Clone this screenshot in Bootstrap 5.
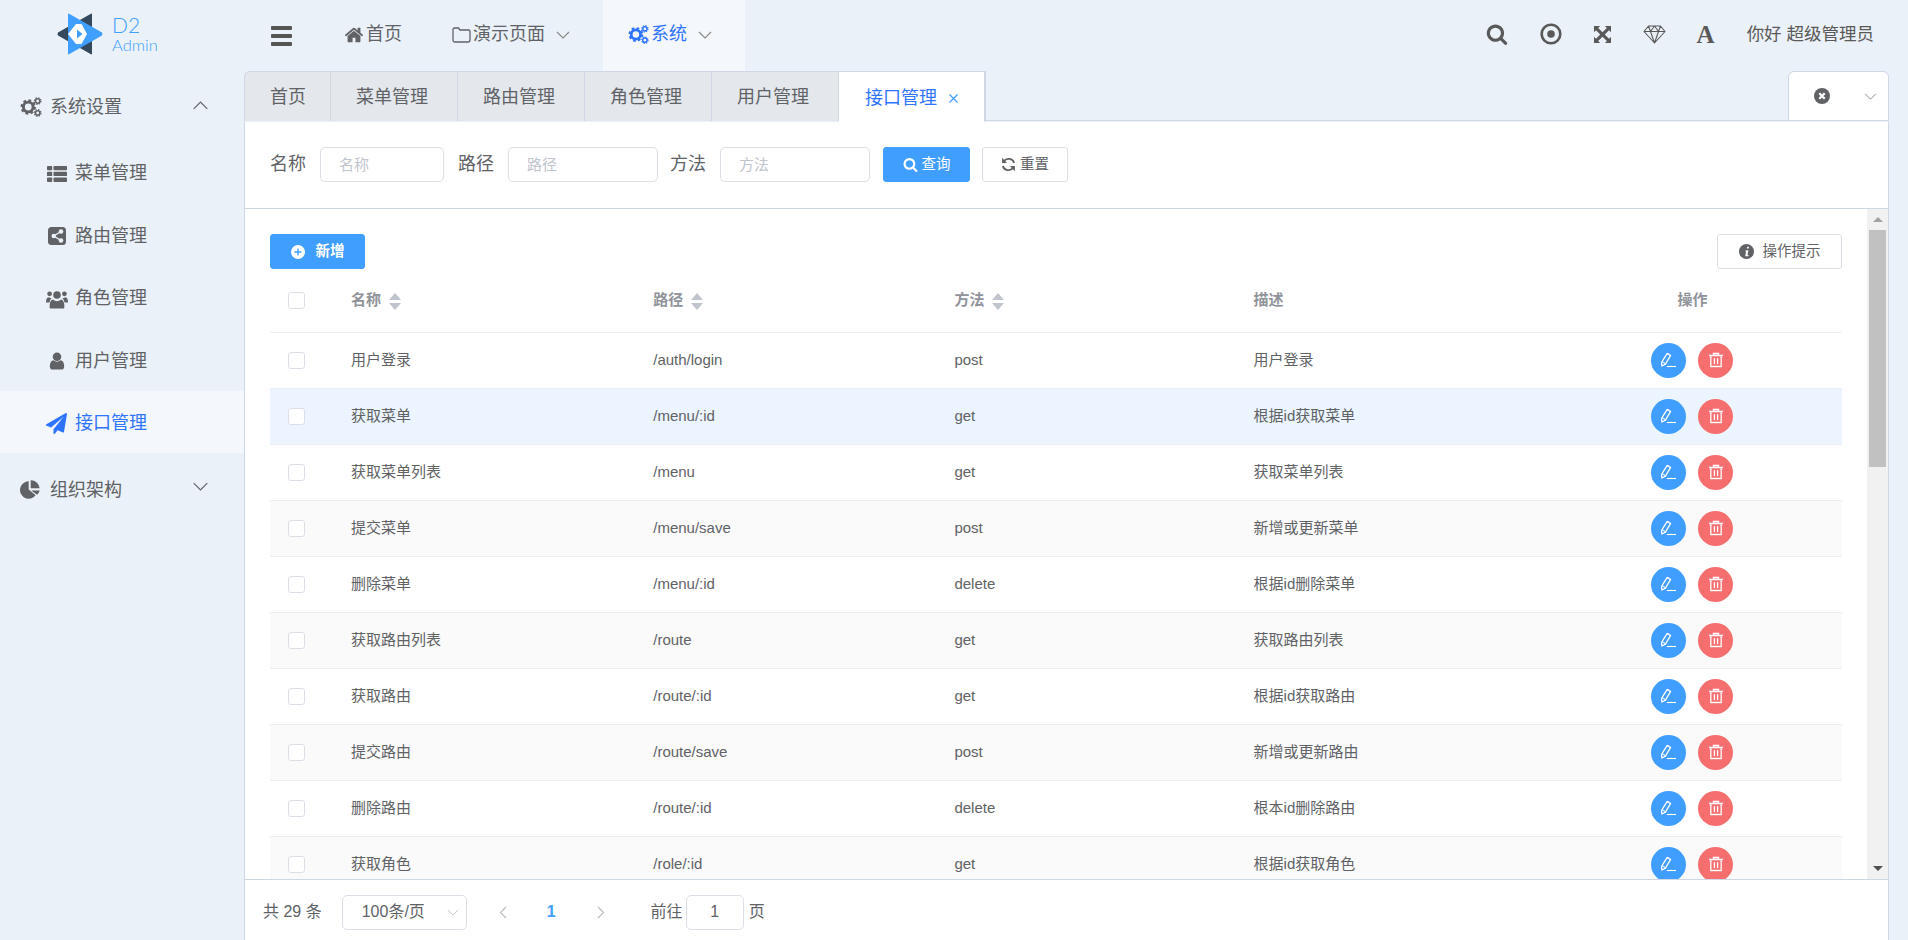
<!DOCTYPE html>
<html lang="zh-CN">
<head>
<meta charset="utf-8">
<title>接口管理</title>
<link rel="stylesheet" href="https://cdn.jsdelivr.net/npm/bootstrap@5.3.0/dist/css/bootstrap.min.css">
<style>
:root{--pg:#ebf1f8;--ink:#606266;--line:#cfd7e5;--blue:#409eff;--act:#2f74ff;--cell:#ebeef5}
html,body{height:100%}
body{background:var(--pg);color:var(--ink);font-family:"Liberation Sans","Noto Sans CJK SC",sans-serif;font-size:18px;overflow:hidden}
svg{display:block;flex:none;fill:currentColor}
.chev{fill:none;stroke:currentColor;stroke-width:1.1}
.shell{height:940px}
.topbar{height:71px;flex:none}
.logo-box{width:245px;padding:0 0 3px 57px;gap:9px;flex:none;height:71px}
.logo-d2{font-family:Lato,sans-serif;color:var(--blue);line-height:1}
.logo-d2 b{display:block;font-weight:300;font-size:21px;line-height:21px}
.logo-d2 i{display:block;font-style:normal;font-size:16.5px;line-height:17px;margin-top:2px;font-weight:300}
.burger{width:21px;margin:0 27px 0 26px;gap:4px}
.burger span{display:block;height:4px;background:#555;border-radius:1px}
.hnav{height:71px;padding:0 25px 2px;gap:2px}
.hnav .chev{margin-left:9px;color:#888}
.hnav.sub{padding-right:33px}
.hnav.now{background:#f4f7fb;color:var(--act)}
.tool-btn{color:#595959}
.tools{gap:0;padding:0 34px 3px 0}
.hello{font-size:17.5px;margin-left:32px}
.ico-a{font-family:"Liberation Serif",serif;font-weight:700;font-size:25px;line-height:1}
.side{width:244px;flex:none;padding-top:7px}
.s-row{height:62.5px;padding-left:20px;padding-bottom:4px}
.s-row .lbl{margin-left:8px}
.s-row .chev{margin-left:auto;margin-right:35px;color:#666;margin-top:-4px}
.s-sub{padding-left:46px;padding-top:4px;padding-bottom:0}
.s-sub .ic{width:21px;display:flex;justify-content:center}
.s-sub .lbl{margin-left:8px}
.s-sub.now{background:#f4f7fb;color:var(--act)}
.s-row.s-last{padding-top:8px;padding-bottom:0;height:66px}
.s-row.s-last .chev{margin-top:-8px}
.workarea{margin-right:19px;min-width:0}
.tabbar{height:51px;flex:none}
.tabs-wrap{border-bottom:1px solid var(--line);height:50px}
.tabstrip{background:#e4e8ec;border:1px solid var(--line);border-bottom:0;border-top-left-radius:6px;height:50px;box-sizing:border-box}
.tabitem{height:49px;padding:2px 29px 0 25px;border-right:1px solid var(--line)}
.tabitem.first{padding-right:24px}
.tabitem.now{background:#fff;color:var(--act);height:50px;padding:2px 25px 0 26px;gap:11px}
.tabitem.now svg{color:var(--blue)}
.closer{width:101px;height:50px;background:#fff;border:1px solid var(--line);border-top-left-radius:6px;border-top-right-radius:6px;padding:0 11px 0 25px;flex:none;margin-left:auto}
.pane{background:#fff;border:solid var(--line);border-width:0 1px;min-height:0}
.qform{height:87px;padding:25px 0 0 25px;border-bottom:1px solid var(--line);flex:none}
.qform label{margin-right:14px;width:36px;white-space:nowrap;height:35px}
.qinput{height:35px;padding:0 18px;font-size:15px;border-color:#dcdfe6;border-radius:5px;margin-right:14px;color:var(--ink)}
.qinput.w1{width:124px}
.qinput.w2{width:150px;margin-right:12px}
.qinput.w3{width:150px;margin-right:13px}
.qinput::placeholder{color:#c0c4cc}
.qbtn{height:35px;font-size:14.5px;border-radius:3px;padding:0;gap:4px;line-height:1}
.qbtn.b1{width:87px;background:var(--blue);border-color:var(--blue);color:#fff}
.qbtn.b2{width:86px;margin-left:12px;background:#fff;border-color:#dcdfe6;color:var(--ink)}
.tablezone{flex:1 1 0;min-height:0}
.scroller{overflow:hidden;padding:25px 25px 0 25px;flex:1 1 0;min-width:0}
.rail{width:21px;flex:none;background:#f1f1f1;height:100%}
.rail-btn{height:21px;flex:none}
.rail-thumb{height:237px;margin:0 2px;background:#c1c1c1;flex:none}
.actbar{height:35px}
.add-btn{width:95px;height:35px;background:var(--blue);border-color:var(--blue);color:#fff;font-size:14.5px;font-weight:700;padding:0;gap:11px;border-radius:3px}
.tip-btn{width:125px;height:35px;background:#fff;border-color:#dcdfe6;color:var(--ink);font-size:14.5px;padding:0;gap:9px;border-radius:3px}
.api-table{table-layout:fixed;width:1572px;margin:0;font-size:15px;--bs-table-color:var(--ink);--bs-table-bg:transparent;border-color:var(--cell)}
.api-table th{height:63px;color:#909399;font-weight:700;padding:0 10px;vertical-align:middle;border-bottom:1px solid var(--cell)}
.api-table td{height:56px;padding:0 10px;vertical-align:middle;border-bottom:1px solid var(--cell);background:#fff}
.api-table tbody tr:nth-of-type(even) td{background:#fafafa}
.api-table tbody tr.hot td{background:#ecf5ff}
.api-table .c-sel{padding-left:18px}
.api-table .c-op{text-align:center}
.tick{width:17px;height:17px;border:1px solid #dcdfe6;border-radius:3px;background:#fff;display:block}
.sorter{display:inline-flex;flex-direction:column;gap:3px;margin-left:8px;vertical-align:middle}
.sorter i{display:block;width:0;height:0;border:solid transparent;border-width:0 6px}
.sorter i.up{border-bottom:7px solid #c0c4cc}
.sorter i.dn{border-top:7px solid #c0c4cc}
.round{width:35px;height:35px;border-radius:50%;border:0;padding:0;color:#fff;display:inline-flex;align-items:center;justify-content:center;vertical-align:middle}
.round.e{background:var(--blue)}
.round.d{background:#f76e6e;margin-left:12px}
.pager{height:61px;flex:none;border-top:1px solid var(--line);padding:4px 0 0 18px;font-size:16px}
.sizebox{width:125px;height:35px;border:1px solid #dcdfe6;border-radius:5px;margin-left:20px;padding:0 7px 0 19px;white-space:nowrap}
.sizebox svg{margin-left:auto;color:#c0c4cc}
.pg-prev{margin-left:32px;color:#b5b9c2}
.pg-cur{margin-left:40px;margin-right:41px;color:var(--blue);font-weight:700;font-size:16px}
.pg-next{color:#b5b9c2}
.goto{margin-left:46px}
.goinput{width:58px;height:35px;padding:0;text-align:center;margin:0 5px 0 3px;border-color:#dcdfe6;border-radius:5px;color:var(--ink);font-size:16px}
</style>
</head>
<body>
<svg width="0" height="0" class="position-absolute">
<defs>
<symbol id="i-home" viewBox="0 0 1792 1792"><path d="M1472 992v480q0 26-19 45t-45 19h-384v-384h-256v384h-384q-26 0-45-19t-19-45v-480q0-1 .5-3t.5-3l575-474 575 474q1 2 1 6zm223-69l-62 74q-8 9-21 11h-3q-13 0-21-7l-692-577-692 577q-12 8-24 7-13-2-21-11l-62-74q-8-10-7-23.500t11-21.500l719-599q32-26 76-26t76 26l244 204v-195q0-14 9-23t23-9h192q14 0 23 9t9 23v408l219 182q10 8 11 21.500t-7 23.500z"/></symbol>
<symbol id="i-search" viewBox="0 0 1792 1792"><path d="M1216 832q0-185-131.500-316.500t-316.500-131.500-316.500 131.500-131.500 316.500 131.500 316.500 316.500 131.500 316.500-131.500 131.500-316.500zm512 832q0 52-38 90t-90 38q-54 0-90-38l-343-342q-179 124-399 124-143 0-273.500-55.500t-225-150-150-225-55.500-273.500 55.500-273.500 150-225 225-150 273.500-55.500 273.500 55.500 225 150 150 225 55.500 273.500q0 220-124 399l343 343q37 37 37 90z"/></symbol>
<symbol id="i-user" viewBox="0 0 1792 1792"><path d="M1536 1399q0 109-62.500 187t-150.500 78h-854q-88 0-150.500-78t-62.500-187q0-85 8.500-160.500t31.500-152 58.500-131 94-89 134.500-34.500q131 128 313 128t313-128q76 0 134.500 34.500t94 89 58.500 131 31.500 152 8.500 160.500zm-256-887q0 159-112.500 271.500t-271.500 112.500-271.500-112.500-112.500-271.500 112.500-271.500 271.500-112.500 271.500 112.500 112.500 271.500z"/></symbol>
<symbol id="i-plane" viewBox="0 0 1792 1792"><path d="M1764 11q33 24 27 64l-256 1536q-5 29-32 45-14 8-31 8-11 0-24-5l-453-185-242 295q-18 23-49 23-13 0-22-4-19-7-30.500-23.500t-11.500-36.500v-349l864-1059-1069 925-395-162q-37-14-40-55-2-40 32-59l1664-960q15-9 32-9 20 0 36 11z"/></symbol>
<symbol id="i-pie" viewBox="0 0 20 20"><path d="M8.700 1.300A8.700 8.700 0 1 0 15.600 15.300L8.700 9.600z"/><path d="M10.700 0.300A8.700 8.700 0 0 1 19.600 8.300H10.700z"/><path d="M11.200 10.400h8.500A8.700 8.700 0 0 1 17 14.700z"/></symbol>
<symbol id="i-cogs" viewBox="0 0 24 24"><circle cx="9" cy="12" r="5.300" fill="none" stroke="currentColor" stroke-width="3.200"/><circle cx="9" cy="12" r="7.300" fill="none" stroke="currentColor" stroke-width="2.300" stroke-dasharray="3 2.730"/><circle cx="19.300" cy="5.500" r="2.400" fill="none" stroke="currentColor" stroke-width="1.700"/><circle cx="19.300" cy="5.500" r="3.600" fill="none" stroke="currentColor" stroke-width="1.300" stroke-dasharray="1.500 1.330"/><circle cx="19.300" cy="18.500" r="2.400" fill="none" stroke="currentColor" stroke-width="1.700"/><circle cx="19.300" cy="18.500" r="3.600" fill="none" stroke="currentColor" stroke-width="1.300" stroke-dasharray="1.500 1.330"/></symbol>
<symbol id="i-list" viewBox="0 0 20 16"><rect y="0" width="5.200" height="4.300" rx=".7"/><rect x="6.500" y="0" width="13.500" height="4.300" rx=".7"/><rect y="5.800" width="5.200" height="4.300" rx=".7"/><rect x="6.500" y="5.800" width="13.500" height="4.300" rx=".7"/><rect y="11.600" width="5.200" height="4.300" rx=".7"/><rect x="6.500" y="11.600" width="13.500" height="4.300" rx=".7"/></symbol>
<symbol id="i-share" viewBox="0 0 18 18"><rect width="18" height="18" rx="3.500"/><g fill="#ebf1f8"><circle cx="13" cy="4.500" r="2.300"/><circle cx="13" cy="13.500" r="2.300"/><circle cx="5.800" cy="9" r="2.300"/></g><path d="M13 4.500L5.800 9l7.200 4.500" fill="none" stroke="#ebf1f8" stroke-width="1.400"/></symbol>
<symbol id="i-users" viewBox="0 0 22 20"><circle cx="11" cy="6" r="3.800"/><circle cx="3.600" cy="4.800" r="2.400"/><circle cx="18.400" cy="4.800" r="2.400"/><path d="M4.800 19.500q-1.200 0-1.200-1.500 0-7 3.200-7.500 2 1.700 4.200 1.700t4.200-1.700q3.200.5 3.200 7.500 0 1.500-1.200 1.500z"/><path d="M0 13.500q0-5 2.500-5.300 1.200 1 3 .8-1.500 1.500-2 4.500z"/><path d="M22 13.500q0-5-2.500-5.300-1.200 1-3 .8 1.500 1.500 2 4.500z"/></symbol>
<symbol id="i-edit" viewBox="0 0 16 16"><path d="M6.800 1.300l3.200 1.900-4.900 8.200-3.400 1.800-.1-3.700z" fill="none" stroke="currentColor" stroke-width="1.200" stroke-linejoin="round"/><path d="M2.300 9.300l3.200 1.900" fill="none" stroke="currentColor" stroke-width="1"/><rect x="6.500" y="13.100" width="8.500" height="1.100"/></symbol>
<symbol id="i-trash" viewBox="0 0 16 16"><path d="M1 3.500h14M5.500 3.300V1.500h5v1.800M2.800 3.500v11h10.400v-11M6.400 6v6M9.600 6v6" fill="none" stroke="currentColor" stroke-width="1.300"/></symbol>
<symbol id="i-down" viewBox="0 0 14 8"><path class="chev" d="M1 1l6 6 6-6"/></symbol>
<symbol id="i-up" viewBox="0 0 14 8"><path class="chev" d="M1 7l6-6 6 6"/></symbol>
</defs>
</svg>

<div class="shell d-flex flex-column">
  <header class="topbar d-flex align-items-center">
    <div class="logo-box d-flex align-items-center">
      <svg width="46" height="42" viewBox="0 0 46 42" aria-hidden="true">
        <path d="M35 1.500Q35 0 33.500 .9L1 19.600q-1 1.400 0 2.800L33.500 41.100Q35 42 35 40.500z" fill="#34495e"/>
        <path d="M11 1.500Q11 0 12.500 .9L45 19.600q1 1.400 0 2.800L12.500 41.100Q11 42 11 40.500z" fill="#409eff"/>
        <path d="M11 21l8-10 5.500 0L30 21l-5.500 10H19z" fill="#fff"/>
        <path d="M20 16.500l5.500 4.500-5.500 4.500z" fill="#409eff"/>
      </svg>
      <div class="logo-d2"><b>D2</b><i>Admin</i></div>
    </div>
    <div class="burger d-flex flex-column"><span></span><span></span><span></span></div>
    <div class="hnav d-flex align-items-center"><svg width="20" height="20"><use href="#i-home"/></svg><span>首页</span></div>
    <div class="hnav sub d-flex align-items-center">
      <svg width="19" height="18" viewBox="0 0 19 18"><path d="M1 14V3.500Q1 2 2.500 2h4L8 4h8.500Q18 4 18 5.500V14q0 2-2 2H3q-2 0-2-2z" fill="none" stroke="currentColor" stroke-width="1.300"/></svg>
      <span>演示页面</span><svg class="chev" width="14" height="8"><use href="#i-down"/></svg>
    </div>
    <div class="hnav sub now d-flex align-items-center"><svg width="21" height="21"><use href="#i-cogs"/></svg><span>系统</span><svg class="chev" width="14" height="8"><use href="#i-down"/></svg></div>
    <div class="tools ms-auto d-flex align-items-center tool-btn">
      <svg width="22" height="22" class="me-4"><use href="#i-search"/></svg>
      <svg width="22" height="22" viewBox="0 0 22 22" style="margin-left:8px"><circle cx="11" cy="11" r="9.300" fill="none" stroke="currentColor" stroke-width="2.600"/><circle cx="11" cy="11" r="3.800"/></svg>
      <svg width="17" height="17" viewBox="0 0 18 18" style="margin-left:32px"><path d="M0 0h6.500L4.400 2.100 9 6.600 13.600 2.100 11.500 0H18v6.500L15.900 4.400 11.400 9l4.500 4.600 2.100-2.100V18h-6.500l2.100-2.100L9 11.400l-4.600 4.500L6.500 18H0v-6.500l2.100 2.100L6.600 9 2.100 4.400 0 6.500z"/></svg>
      <svg width="23" height="19" viewBox="0 0 23 19" style="margin-left:32px"><path d="M5.500 1h12L22 6.500 11.500 18 1 6.500zM1 6.500h21M7.500 6.500l4 11.500 4-11.500M5.500 1l2 5.500L11.500 1l4 5.500 2-5.500" fill="none" stroke="currentColor" stroke-width="1.100" stroke-linejoin="round"/></svg>
      <span class="ico-a" style="margin-left:31px">A</span>
      <span class="hello">你好 超级管理员</span>
    </div>
  </header>

  <div class="d-flex flex-grow-1" style="min-height:0">
    <aside class="side">
      <div class="s-row d-flex align-items-center"><svg width="22" height="22"><use href="#i-cogs"/></svg><span class="lbl">系统设置</span><svg class="chev" width="17" height="9"><use href="#i-up"/></svg></div>
      <div class="s-row s-sub d-flex align-items-center"><span class="ic"><svg width="20" height="16"><use href="#i-list"/></svg></span><span class="lbl">菜单管理</span></div>
      <div class="s-row s-sub d-flex align-items-center"><span class="ic"><svg width="18" height="18"><use href="#i-share"/></svg></span><span class="lbl">路由管理</span></div>
      <div class="s-row s-sub d-flex align-items-center"><span class="ic"><svg width="22" height="20"><use href="#i-users"/></svg></span><span class="lbl">角色管理</span></div>
      <div class="s-row s-sub d-flex align-items-center"><span class="ic"><svg width="20" height="20"><use href="#i-user"/></svg></span><span class="lbl">用户管理</span></div>
      <div class="s-row s-sub now d-flex align-items-center"><span class="ic"><svg width="21" height="21"><use href="#i-plane"/></svg></span><span class="lbl">接口管理</span></div>
      <div class="s-row s-last d-flex align-items-center"><svg width="20" height="20"><use href="#i-pie"/></svg><span class="lbl" style="margin-left:10px">组织架构</span><svg class="chev" width="17" height="9"><use href="#i-down"/></svg></div>
    </aside>

    <main class="workarea flex-grow-1 d-flex flex-column">
      <div class="tabbar d-flex">
        <div class="tabs-wrap flex-grow-1 d-flex">
          <div class="tabstrip d-flex">
            <div class="tabitem first d-flex align-items-center">首页</div>
            <div class="tabitem d-flex align-items-center">菜单管理</div>
            <div class="tabitem d-flex align-items-center">路由管理</div>
            <div class="tabitem d-flex align-items-center">角色管理</div>
            <div class="tabitem d-flex align-items-center">用户管理</div>
            <div class="tabitem now d-flex align-items-center"><span>接口管理</span><svg width="11" height="11" viewBox="0 0 11 11"><path d="M1.500 1.500l8 8M9.500 1.500l-8 8" stroke="currentColor" stroke-width="1.200"/></svg></div>
          </div>
          <div class="closer d-flex align-items-center justify-content-between">
            <svg width="16" height="16" viewBox="0 0 16 16"><circle cx="8" cy="8" r="8" fill="#606266"/><path d="M5.300 5.300l5.400 5.400M10.700 5.300l-5.400 5.400" stroke="#fff" stroke-width="2.300"/></svg>
            <svg class="chev" width="13" height="7" style="color:#888"><use href="#i-down"/></svg>
          </div>
        </div>
      </div>

      <div class="pane flex-grow-1 d-flex flex-column">
        <form class="qform d-flex align-items-start" onsubmit="return false">
          <label class="d-flex align-items-center">名称</label>
          <input class="form-control qinput w1" placeholder="名称">
          <label class="d-flex align-items-center">路径</label>
          <input class="form-control qinput w2" placeholder="路径">
          <label class="d-flex align-items-center">方法</label>
          <input class="form-control qinput w3" placeholder="方法">
          <button class="btn qbtn b1 d-inline-flex align-items-center justify-content-center"><svg width="15" height="15"><use href="#i-search"/></svg>查询</button>
          <button class="btn qbtn b2 d-inline-flex align-items-center justify-content-center"><svg width="15" height="15" viewBox="0 0 14 14"><path d="M12.300 5.500A5.500 5.500 0 0 0 2.600 4M1.700 8.500A5.500 5.500 0 0 0 11.400 10" fill="none" stroke="currentColor" stroke-width="1.700"/><path d="M1 .8v4.700h4.700zM13 13.200V8.500H8.300z"/></svg>重置</button>
        </form>

        <div class="tablezone d-flex">
          <div class="scroller">
            <div class="actbar d-flex justify-content-between">
              <button class="btn add-btn d-inline-flex align-items-center justify-content-center"><svg width="14" height="14" viewBox="0 0 14 14"><circle cx="7" cy="7" r="7" fill="#fff"/><path d="M3.500 7h7M7 3.500v7" stroke="#409eff" stroke-width="1.400"/></svg>新增</button>
              <button class="btn tip-btn d-inline-flex align-items-center justify-content-center"><svg width="15" height="15" viewBox="0 0 15 15"><circle cx="7.500" cy="7.500" r="7.500" fill="#606266"/><path d="M8.200 2.800h1.800l-.3 1.800H7.900zM7 6.200h2.400L8.500 11h1v1.200H6.200L7.100 7.400H6z" fill="#fff"/></svg>操作提示</button>
            </div>
            <table class="table api-table">
              <colgroup><col style="width:71px"><col style="width:302px"><col style="width:301px"><col style="width:299px"><col style="width:299px"></colgroup>
              <thead><tr>
                <th class="c-sel"><span class="tick"></span></th>
                <th>名称<span class="sorter"><i class="up"></i><i class="dn"></i></span></th>
                <th>路径<span class="sorter"><i class="up"></i><i class="dn"></i></span></th>
                <th>方法<span class="sorter"><i class="up"></i><i class="dn"></i></span></th>
                <th>描述</th>
                <th class="c-op" style="width:299px">操作</th>
              </tr></thead>
              <tbody>
                <tr><td class="c-sel"><span class="tick"></span></td><td>用户登录</td><td>/auth/login</td><td>post</td><td>用户登录</td><td class="c-op"><button class="round e"><svg width="17" height="17"><use href="#i-edit"/></svg></button><button class="round d"><svg width="16" height="16"><use href="#i-trash"/></svg></button></td></tr>
                <tr class="hot"><td class="c-sel"><span class="tick"></span></td><td>获取菜单</td><td>/menu/:id</td><td>get</td><td>根据id获取菜单</td><td class="c-op"><button class="round e"><svg width="17" height="17"><use href="#i-edit"/></svg></button><button class="round d"><svg width="16" height="16"><use href="#i-trash"/></svg></button></td></tr>
                <tr><td class="c-sel"><span class="tick"></span></td><td>获取菜单列表</td><td>/menu</td><td>get</td><td>获取菜单列表</td><td class="c-op"><button class="round e"><svg width="17" height="17"><use href="#i-edit"/></svg></button><button class="round d"><svg width="16" height="16"><use href="#i-trash"/></svg></button></td></tr>
                <tr><td class="c-sel"><span class="tick"></span></td><td>提交菜单</td><td>/menu/save</td><td>post</td><td>新增或更新菜单</td><td class="c-op"><button class="round e"><svg width="17" height="17"><use href="#i-edit"/></svg></button><button class="round d"><svg width="16" height="16"><use href="#i-trash"/></svg></button></td></tr>
                <tr><td class="c-sel"><span class="tick"></span></td><td>删除菜单</td><td>/menu/:id</td><td>delete</td><td>根据id删除菜单</td><td class="c-op"><button class="round e"><svg width="17" height="17"><use href="#i-edit"/></svg></button><button class="round d"><svg width="16" height="16"><use href="#i-trash"/></svg></button></td></tr>
                <tr><td class="c-sel"><span class="tick"></span></td><td>获取路由列表</td><td>/route</td><td>get</td><td>获取路由列表</td><td class="c-op"><button class="round e"><svg width="17" height="17"><use href="#i-edit"/></svg></button><button class="round d"><svg width="16" height="16"><use href="#i-trash"/></svg></button></td></tr>
                <tr><td class="c-sel"><span class="tick"></span></td><td>获取路由</td><td>/route/:id</td><td>get</td><td>根据id获取路由</td><td class="c-op"><button class="round e"><svg width="17" height="17"><use href="#i-edit"/></svg></button><button class="round d"><svg width="16" height="16"><use href="#i-trash"/></svg></button></td></tr>
                <tr><td class="c-sel"><span class="tick"></span></td><td>提交路由</td><td>/route/save</td><td>post</td><td>新增或更新路由</td><td class="c-op"><button class="round e"><svg width="17" height="17"><use href="#i-edit"/></svg></button><button class="round d"><svg width="16" height="16"><use href="#i-trash"/></svg></button></td></tr>
                <tr><td class="c-sel"><span class="tick"></span></td><td>删除路由</td><td>/route/:id</td><td>delete</td><td>根本id删除路由</td><td class="c-op"><button class="round e"><svg width="17" height="17"><use href="#i-edit"/></svg></button><button class="round d"><svg width="16" height="16"><use href="#i-trash"/></svg></button></td></tr>
                <tr><td class="c-sel"><span class="tick"></span></td><td>获取角色</td><td>/role/:id</td><td>get</td><td>根据id获取角色</td><td class="c-op"><button class="round e"><svg width="17" height="17"><use href="#i-edit"/></svg></button><button class="round d"><svg width="16" height="16"><use href="#i-trash"/></svg></button></td></tr>
              </tbody>
            </table>
          </div>
          <div class="rail d-flex flex-column" aria-hidden="true">
            <div class="rail-btn d-flex align-items-center justify-content-center"><svg width="10" height="5" viewBox="0 0 10 5"><path d="M5 0l5 5H0z" fill="#a3a3a3"/></svg></div>
            <div class="rail-thumb"></div>
            <div class="flex-grow-1"></div>
            <div class="rail-btn d-flex align-items-center justify-content-center"><svg width="10" height="5" viewBox="0 0 10 5"><path d="M0 0h10L5 5z" fill="#505050"/></svg></div>
          </div>
        </div>

        <div class="pager d-flex align-items-center">
          <span>共 29 条</span>
          <div class="sizebox d-flex align-items-center"><span>100条/页</span><svg width="12" height="7" class="chev"><use href="#i-down"/></svg></div>
          <svg class="pg-prev chev" width="8" height="13" viewBox="0 0 8 13"><path d="M7 1L1.500 6.500 7 12"/></svg>
          <span class="pg-cur">1</span>
          <svg class="pg-next chev" width="8" height="13" viewBox="0 0 8 13"><path d="M1 1l5.500 5.500L1 12"/></svg>
          <span class="goto">前往</span>
          <input class="form-control goinput" value="1">
          <span>页</span>
        </div>
      </div>
    </main>
  </div>
</div>
<script src="https://cdn.jsdelivr.net/npm/bootstrap@5.3.0/dist/js/bootstrap.bundle.min.js"></script>
</body>
</html>
